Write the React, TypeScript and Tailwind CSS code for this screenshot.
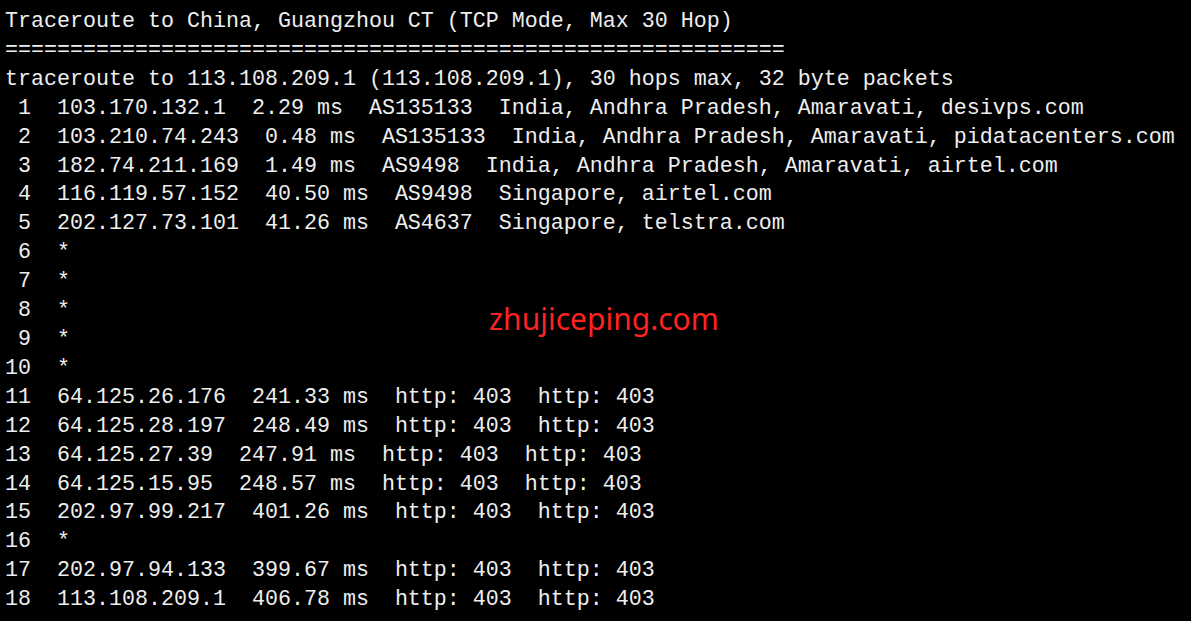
import React from "react";

const lines = [
  "Traceroute to China, Guangzhou CT (TCP Mode, Max 30 Hop)",
  "============================================================",
  "traceroute to 113.108.209.1 (113.108.209.1), 30 hops max, 32 byte packets",
  " 1  103.170.132.1  2.29 ms  AS135133  India, Andhra Pradesh, Amaravati, desivps.com",
  " 2  103.210.74.243  0.48 ms  AS135133  India, Andhra Pradesh, Amaravati, pidatacenters.com",
  " 3  182.74.211.169  1.49 ms  AS9498  India, Andhra Pradesh, Amaravati, airtel.com",
  " 4  116.119.57.152  40.50 ms  AS9498  Singapore, airtel.com",
  " 5  202.127.73.101  41.26 ms  AS4637  Singapore, telstra.com",
  " 6  *",
  " 7  *",
  " 8  *",
  " 9  *",
  "10  *",
  "11  64.125.26.176  241.33 ms  http: 403  http: 403",
  "12  64.125.28.197  248.49 ms  http: 403  http: 403",
  "13  64.125.27.39  247.91 ms  http: 403  http: 403",
  "14  64.125.15.95  248.57 ms  http: 403  http: 403",
  "15  202.97.99.217  401.26 ms  http: 403  http: 403",
  "16  *",
  "17  202.97.94.133  399.67 ms  http: 403  http: 403",
  "18  113.108.209.1  406.78 ms  http: 403  http: 403",
];

export default function App() {
  return (
    <div className="relative w-[1191px] h-[621px] bg-black overflow-hidden">
      <div className="flex flex-col pl-[5px] pt-[8px] font-['Liberation_Mono','DejaVu_Sans_Mono',monospace] text-[21.67px] leading-[28.9px] text-[#eeeeee] whitespace-pre">
        {lines.map((l, i) => (
          <div key={i}>{l}</div>
        ))}
      </div>
      <div className="absolute left-[489px] top-[301px] font-['Noto_Sans',sans-serif] text-[30px] leading-[36px] text-[#ff2222]">
        zhujiceping.com
      </div>
    </div>
  );
}
